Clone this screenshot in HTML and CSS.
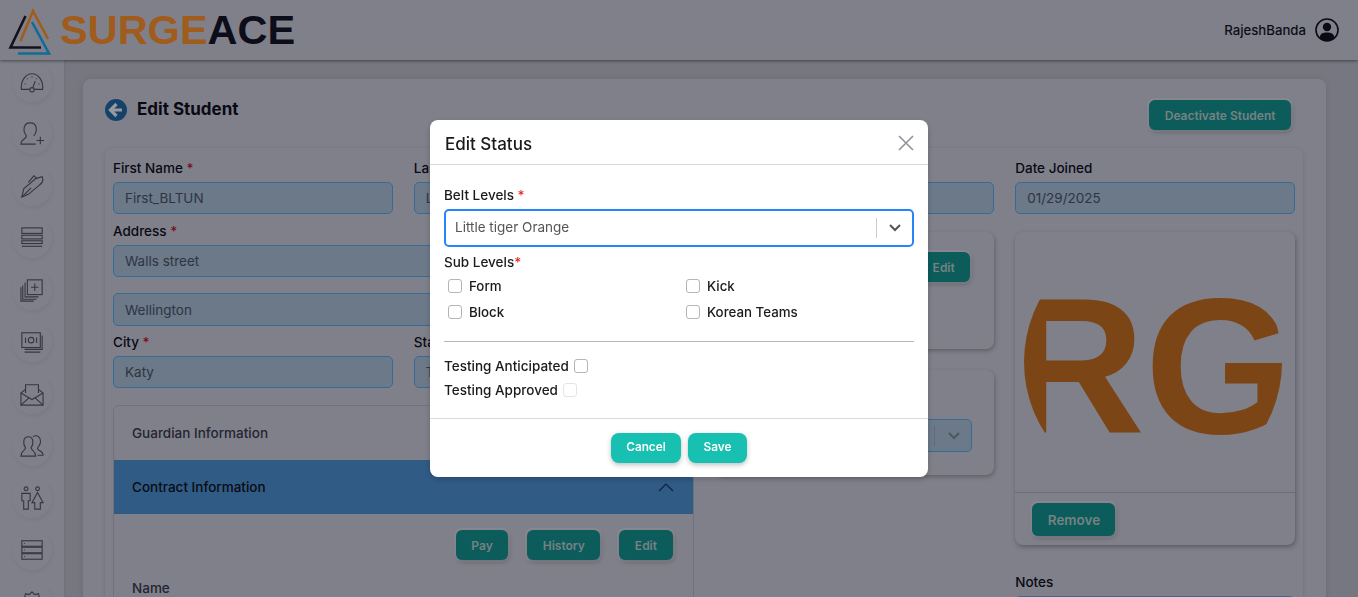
FILE: index.html
```html
<!doctype html>
<html lang="en">
  <head>
    <meta charset="UTF-8" />
    <meta name="viewport" content="width=device-width, initial-scale=1.0" />
    <title>Edit Student | SurgeAce</title>
    <link rel="stylesheet" href="styles.css">
  </head>

  <body>
    <header class="topbar">
      <div class="logo">
        <svg class="logo-mark" width="44" height="50" viewBox="0 0 44 50" fill="none" stroke-width="2.600">
          <path d="M12.500 35 L25 5 L40 33" stroke="#e6852a" />
          <path d="M17.500 10 L2.500 41.500 H33" stroke="#1b1b2c" />
          <path d="M24 16 L41 47.500 H10" stroke="#1a9ad6" />
        </svg>
        <span class="logo-text"><span class="logo-surge">SURGE</span><span class="logo-ace">ACE</span></span>
      </div>
      <div class="user">
        <span>RajeshBanda</span>
        <svg width="24" height="24" viewBox="0 0 24 24" fill="none">
          <circle cx="12" cy="12" r="11" stroke="#10101e" stroke-width="1.600" />
          <circle cx="12" cy="9" r="4.200" fill="#10101e" />
          <path d="M4.500 20 C5 15.500 8 14.500 12 14.500 C16 14.500 19 15.500 19.500 20 C17.500 22 15 23 12 23 C9 23 6.500 22 4.500 20Z" fill="#10101e" />
        </svg>
      </div>
    </header>

    <div class="layout">
      <nav class="sidebar">
        <a class="nav-item">
          <svg viewBox="0 0 26 26"><path d="M10.500 21 H1.500 C0.500 12 6 4 13 4 C20 4 25.500 12 24.500 21 H15.500" /><circle cx="13" cy="21.500" r="2.400" /><path d="M14 19 L16.500 12" /><path d="M5 15 h1 M7.500 9.500 h1 M13 7 v1 M20 15 h1 M17.500 9.500 h1" /></svg>
        </a>
        <a class="nav-item">
          <svg viewBox="0 0 26 26"><path d="M15 15 C19 10 19 1 11 1 C3 1 3 10 7 15 C7 19 1 18 1 24 H17" /><path d="M18 20 H26 M22 16 V24" /></svg>
        </a>
        <a class="nav-item">
          <svg viewBox="0 0 26 26"><path d="M2 25 L4 16 L17 5 L24 3 C26 7 24 10 21 12 L9 22 Z" /><path d="M2 25 L12 15" /><path d="M9 9 L15 2 L18 4.500" /></svg>
        </a>
        <a class="nav-item">
          <svg viewBox="0 0 26 26"><rect x="2" y="2" width="22" height="6" /><rect x="2" y="10" width="22" height="4" /><rect x="2" y="16" width="22" height="3" /><path d="M2 22 H24" /></svg>
        </a>
        <a class="nav-item">
          <svg viewBox="0 0 26 26"><rect x="8" y="2" width="16" height="16" /><path d="M16 6 V14 M12 10 H20" /><path d="M5.500 5 V20.500 H20 M3 8 V23 H18 M1 10 V25 H15" /></svg>
        </a>
        <a class="nav-item">
          <svg viewBox="0 0 26 26"><rect x="2" y="3" width="20" height="16" /><circle cx="12" cy="11" r="3" /><path d="M6 8 V14 M18 8 V14" /><path d="M24 6 V21 H5 M22 24 H5" /></svg>
        </a>
        <a class="nav-item">
          <svg viewBox="0 0 26 26"><path d="M6 12 V3 H20 V12" /><path d="M6 8 L1 12 V25 H25 V12 L20 8" /><path d="M1 12 L13 19 L25 12 M1 25 L10 17 M25 25 L16 17" /></svg>
        </a>
        <a class="nav-item">
          <svg viewBox="0 0 26 26"><path d="M12 15 C15 11 15 3 9 3 C3 3 3 11 6 15 C6 18 1 18 1 24 H17 C17 18 12 18 12 15Z" /><path d="M14 3 C19 0 23 4 22 10 C21 13 19 14 19 16 C19 18 25 18 25 23 H19" /></svg>
        </a>
        <a class="nav-item">
          <svg viewBox="0 0 26 26"><circle cx="6.500" cy="3" r="2" /><circle cx="19" cy="3" r="2" /><path d="M2 8 H11 V16 H9 V25 H4 V16 H2 Z" /><path d="M19 7 L25 18 H22 V25 H16 V18 H13 Z" /></svg>
        </a>
        <a class="nav-item">
          <svg viewBox="0 0 26 26"><rect x="2" y="3" width="22" height="6" /><rect x="2" y="10" width="22" height="6" /><rect x="2" y="17" width="22" height="6" /><path d="M4.500 6 h1 M4.500 13 h1 M4.500 20 h1" /></svg>
        </a>
        <a class="nav-item">
          <svg viewBox="0 0 26 26"><path d="M13 2 L16 5 L20 4 L21 8 L25 10 L23 13 L25 17 L21 18 L20 22 L16 21 L13 24 L10 21 L6 22 L5 18 L1 17 L3 13 L1 10 L5 8 L6 4 L10 5 Z" /></svg>
        </a>
      </nav>

      <main class="content">
        <section class="page-card">
          <div class="page-head">
            <div class="page-title">
              <svg width="22" height="22" viewBox="0 0 22 22">
                <circle cx="11" cy="11" r="11" fill="#1f5f97" />
                <path d="M11.500 5 L5.500 11 L11.500 17 M6 11 H17" fill="none" stroke="#d8dbe4" stroke-width="3.200" />
              </svg>
              <h1>Edit Student</h1>
            </div>
            <button class="btn btn-page">Deactivate Student</button>
          </div>

          <div class="form-card">
            <div class="col-wide">
              <div class="two-col">
                <div class="field">
                  <label>First Name <b>*</b></label>
                  <div class="input">First_BLTUN</div>
                </div>
                <div class="field">
                  <label>Last Name <b>*</b></label>
                  <div class="input">Last_BLTUN</div>
                </div>
              </div>
              <div class="field">
                <label>Address <b>*</b></label>
                <div class="input">Walls street</div>
              </div>
              <div class="input input-second">Wellington</div>
              <div class="two-col">
                <div class="field">
                  <label>City <b>*</b></label>
                  <div class="input">Katy</div>
                </div>
                <div class="field">
                  <label>State <b>*</b></label>
                  <div class="input">TX</div>
                </div>
              </div>

              <div class="accordion">
                <div class="acc-head">Guardian Information</div>
                <div class="acc-head acc-open">
                  Contract Information
                  <svg width="16" height="9" viewBox="0 0 16 9" fill="none"><path d="M1 8 L8 1 L15 8" stroke="#1a2a6e" stroke-width="1.200" /></svg>
                </div>
                <div class="acc-body">
                  <div class="acc-actions">
                    <button class="btn">Pay</button>
                    <button class="btn">History</button>
                    <button class="btn">Edit</button>
                  </div>
                  <div class="acc-label">Name</div>
                </div>
              </div>
            </div>

            <div class="col">
              <div class="field">
                <label>Email</label>
                <div class="input"></div>
              </div>
              <div class="sub-card sub-card-one">
                <button class="btn">Edit</button>
              </div>
              <div class="sub-card sub-card-two">
                <div class="input select-dim">
                  <span class="sep"></span>
                  <svg width="12" height="8" viewBox="0 0 12 8" fill="none"><path d="M1 1 L6 6 L11 1" stroke="#737c88" stroke-width="2" /></svg>
                </div>
              </div>
            </div>

            <div class="col">
              <div class="field">
                <label>Date Joined</label>
                <div class="input">01/29/2025</div>
              </div>
              <div class="photo-card">
                <div class="photo">
                  <div class="avatar">RG</div>
                </div>
                <div class="photo-foot">
                  <button class="btn btn-remove">Remove</button>
                </div>
              </div>
              <div class="field notes">
                <label>Notes</label>
                <div class="input"></div>
              </div>
            </div>
          </div>
        </section>
      </main>
    </div>

    <div class="overlay">
      <div class="modal">
        <div class="modal-head">
          <h2>Edit Status</h2>
          <svg width="16" height="16" viewBox="0 0 16 16" fill="none"><path d="M1 1 L15 15 M15 1 L1 15" stroke="#8f9399" stroke-width="1.600" /></svg>
        </div>
        <div class="modal-body">
          <label class="m-label">Belt Levels <b>*</b></label>
          <div class="m-select">
            <span>Little tiger Orange</span>
            <span class="m-sep"></span>
            <svg width="12" height="8" viewBox="0 0 12 8" fill="none"><path d="M1 1 L6 6 L11 1" stroke="#555" stroke-width="2" /></svg>
          </div>
          <label class="m-label m-sub">Sub Levels<b>*</b></label>
          <div class="check-grid">
            <div class="check"><i class="box"></i>Form</div>
            <div class="check"><i class="box"></i>Kick</div>
            <div class="check"><i class="box"></i>Block</div>
            <div class="check"><i class="box"></i>Korean Teams</div>
          </div>
          <hr class="m-rule" />
          <div class="check-line">Testing Anticipated <i class="box"></i></div>
          <div class="check-line">Testing Approved <i class="box box-off"></i></div>
        </div>
        <div class="modal-foot">
          <button class="btn-modal btn-cancel">Cancel</button>
          <button class="btn-modal btn-save">Save</button>
        </div>
      </div>
    </div>
  </body>
</html>
```

FILE: styles.css
```css
* {
  box-sizing: border-box;
  padding: 0;
  margin: 0;
  font-family: 'Inter', sans-serif;
}

html,
body {
  height: 100%;
  overflow: hidden;
}

body {
  background: #b7b8c6;
  color: #141426;
  font-size: 13.5px;
}

.topbar {
  height: 60px;
  padding: 0 19px 0 8px;
  display: flex;
  justify-content: space-between;
  align-items: center;
  background: #b7b8c6;
  box-shadow: 0 1px 3px rgba(0, 0, 0, 0.45);
  position: relative;
}

.logo {
  display: flex;
  align-items: center;
}

.logo-mark {
  flex: none;
  margin-top: 2px;
}

.logo-text {
  font-family: 'Liberation Sans', sans-serif;
  font-weight: 700;
  font-size: 41.5px;
  line-height: 60px;
  margin-left: 8px;
}

.logo-surge {
  font-family: 'Liberation Sans', sans-serif;
  color: #e6852a;
}

.logo-ace {
  font-family: 'Liberation Sans', sans-serif;
  color: #141426;
}

.user {
  display: flex;
  align-items: center;
  gap: 9px;
  font-weight: 500;
  font-size: 13.2px;
}

.layout {
  display: flex;
  height: 537px;
}

.sidebar {
  width: 64px;
  flex: none;
  padding-top: 2px;
  display: flex;
  flex-direction: column;
  align-items: center;
  gap: 12px;
  overflow: hidden;
  background: #b7b8c6;
}

.nav-item {
  width: 40px;
  height: 40px;
  flex: none;
  display: flex;
  justify-content: center;
  align-items: center;
  border-radius: 50%;
  background: #b7b8c6;
  box-shadow: 1px 2px 4px rgba(0, 0, 0, 0.06);
}

.nav-item svg {
  width: 24px;
  height: 24px;
  fill: none;
  stroke: #4c4d5c;
  stroke-width: 1.2;
}

.content {
  flex: 1;
  padding: 19px 32px 0 19px;
  background: #aaabb8;
  box-shadow: inset 2px 0 2px rgba(0, 0, 0, 0.04);
  overflow: hidden;
}

.page-card {
  height: 600px;
  padding: 0 23px 0 22px;
  border-radius: 8px;
  background: #b7b8c6;
  box-shadow: 0 0 6px rgba(0, 0, 0, 0.1);
}

.page-head {
  height: 69px;
  padding-right: 12px;
  display: flex;
  justify-content: space-between;
  align-items: center;
}

.page-title {
  display: flex;
  align-items: center;
  gap: 10px;
  margin-bottom: 8px;
}

.page-title h1 {
  margin-bottom: 2px;
  font-size: 17px;
  font-weight: 700;
  color: #0e0e20;
}

.form-card {
  height: 500px;
  padding: 10px 8px 0;
  display: grid;
  grid-template-columns: 1fr 1fr 1fr 1fr;
  column-gap: 21px;
  border-radius: 8px;
  background: #b7b8c6;
  box-shadow: 0 1px 5px rgba(0, 0, 0, 0.14);
}

.col-wide {
  grid-column: span 2;
}

.two-col {
  display: grid;
  grid-template-columns: 1fr 1fr;
  column-gap: 21px;
}

.field {
  margin-bottom: 7px;
}

.field label {
  display: block;
  height: 20px;
  margin-bottom: 4px;
  line-height: 20px;
  font-weight: 500;
  color: #0e0e20;
}

.field label b {
  color: #a81030;
  font-weight: 500;
}

.input {
  height: 32px;
  padding: 0 11px;
  display: flex;
  align-items: center;
  border: 1px solid #4f9ad8;
  border-radius: 5px;
  background: #9aaec4;
  color: #454b5c;
}

.input-second {
  height: 33px;
  margin: 16px 0 6px;
}

.accordion {
  margin-top: 10px;
  border: 1px solid #a2a3b0;
  border-radius: 6px 6px 0 0;
}

.acc-head {
  height: 54px;
  padding: 0 19px 0 18px;
  display: flex;
  justify-content: space-between;
  align-items: center;
  color: #343548;
  font-weight: 500;
}

.acc-open {
  background: #4683be;
  color: #0e1020;
}

.acc-body {
  padding: 16px 20px 0 18px;
}

.acc-actions {
  display: flex;
  justify-content: flex-end;
  gap: 19px;
}

.acc-label {
  margin-top: 18px;
  line-height: 20px;
  font-weight: 500;
  color: #343548;
}

.btn {
  height: 30px;
  padding: 0 15.5px;
  border: none;
  border-radius: 6px;
  background: #118582;
  color: #a9b9bd;
  font-size: 12px;
  font-weight: 600;
  box-shadow: 0 0 0 2px rgba(255, 255, 255, 0.18), 1px 2px 4px rgba(0, 0, 0, 0.25);
}

.btn-page {
  margin-top: 3px;
}

.btn-remove {
  width: 83px;
  height: 33px;
  font-size: 13.5px;
}

.sub-card {
  border-radius: 8px;
  background: #b7b8c6;
  box-shadow: 1px 2px 4px rgba(0, 0, 0, 0.25);
}

.sub-card-one {
  height: 117px;
  margin-top: 18px;
  padding: 20px 24px 0;
  display: flex;
  justify-content: flex-end;
  align-items: flex-start;
}

.sub-card-two {
  height: 105px;
  margin-top: 21px;
  padding: 49px 22px 0;
}

.select-dim {
  height: 33px;
  justify-content: flex-end;
  gap: 13px;
}

.sep {
  width: 1px;
  height: 20px;
  background: #8d98a5;
}

.photo-card {
  height: 313px;
  margin-top: 18px;
  border-radius: 8px;
  background: #b7b8c6;
  box-shadow: 1px 2px 5px rgba(0, 0, 0, 0.3);
}

.photo {
  height: 261px;
  display: flex;
  justify-content: center;
  align-items: center;
  border-bottom: 1px solid #9c9caa;
}

.avatar {
  width: 258px;
  height: 260px;
  margin-right: 4px;
  padding: 8px 6px 0 0;
  display: flex;
  justify-content: center;
  align-items: center;
  border-radius: 50%;
  overflow: hidden;
  flex: none;
  font-family: 'Liberation Sans', sans-serif;
  font-size: 193px;
  font-weight: 700;
  line-height: 1;
  white-space: nowrap;
  color: #b0641f;
}

.photo-foot {
  padding: 10px 17px;
}

.notes {
  margin-top: 27px;
}

.overlay {
  position: fixed;
  inset: 0;
  padding-top: 120px;
  display: flex;
  justify-content: center;
  align-items: flex-start;
  background: rgba(0, 0, 0, 0.3);
}

.modal {
  width: 498px;
  height: 357px;
  border-radius: 8px;
  background: #fff;
  color: #1a1a1a;
  box-shadow: 0 2px 6px rgba(0, 0, 0, 0.2);
}

.modal-head {
  height: 45px;
  padding: 2px 14px 0 15px;
  display: flex;
  justify-content: space-between;
  align-items: center;
  border-bottom: 1px solid #d8dadf;
}

.modal-head h2 {
  margin-top: 2px;
  font-size: 17px;
  font-weight: 500;
}

.modal-body {
  height: 254px;
  padding: 20px 14px 0;
  border-bottom: 1px solid #d8dadf;
}

.m-label {
  display: block;
  height: 20px;
  line-height: 20px;
  font-weight: 550;
}

.m-label b {
  color: #f01d1d;
  font-weight: 500;
}

.m-select {
  height: 38px;
  margin-top: 4px;
  padding: 0 11px 0 9px;
  display: flex;
  align-items: center;
  border: 2px solid #2684ff;
  border-radius: 5px;
  color: #555;
}

.m-select span:first-child {
  flex: 1;
  margin-top: -2px;
}

.m-sep {
  width: 1px;
  height: 20px;
  margin-right: 12px;
  background: #ccc;
}

.m-sub {
  margin-top: 5px;
}

.check-grid {
  margin-top: 1px;
  padding-left: 4px;
  display: grid;
  grid-template-columns: 238px 1fr;
  grid-auto-rows: 26px;
}

.check {
  display: flex;
  align-items: center;
  gap: 7px;
  font-size: 13.3px;
  font-weight: 550;
}

.box {
  width: 14px;
  height: 14px;
  flex: none;
  display: inline-block;
  border: 1px solid #b5b5b5;
  border-radius: 3px;
  background: #fff;
}

.box-off {
  border-color: #e4e4e4;
}

.m-rule {
  margin-top: 16px;
  margin-bottom: 12px;
  border: none;
  border-top: 1px solid #b5b5bb;
}

.check-line {
  height: 24px;
  display: flex;
  align-items: center;
  gap: 5px;
  font-size: 13.5px;
  font-weight: 550;
}

.modal-foot {
  padding-top: 14px;
  display: flex;
  justify-content: center;
  gap: 7px;
}

.btn-modal {
  height: 30px;
  padding-bottom: 2px;
  border: none;
  border-radius: 8px;
  background: #17c0b0;
  color: #fff;
  font-size: 11.8px;
  font-weight: 600;
  box-shadow: 0 2px 5px rgba(0, 0, 0, 0.25);
}

.btn-cancel {
  width: 70px;
}

.btn-save {
  width: 59px;
}
```
